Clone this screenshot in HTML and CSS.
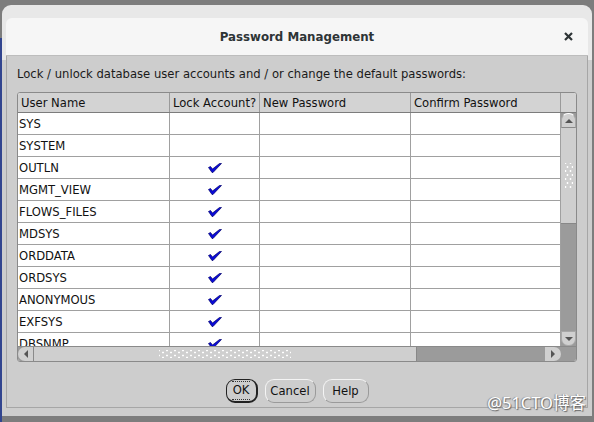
FILE: index.html
```html
<!DOCTYPE html>
<html lang="en">
<head>
    <meta charset="UTF-8">
    <title>Password Management</title>
    <link rel="stylesheet" href="styles.css">
</head>
<body>
    <div class="window">
        <div class="titlebar">
            <span class="title">Password Management</span>
            <svg class="close" width="9" height="9" viewBox="0 0 9 9">
                <path d="M1 1 L8 8 M8 1 L1 8" stroke="#2e3436" stroke-width="2.2" />
            </svg>
        </div>
        <div class="dialog">
            <p class="prompt">Lock / unlock database user accounts and / or change the default passwords:</p>
            <div class="table">
                <div class="head">
                    <div class="th">User Name</div>
                    <div class="th">Lock Account?</div>
                    <div class="th">New Password</div>
                    <div class="th">Confirm Password</div>
                    <div class="th corner"></div>
                </div>
                <div class="main">
                    <div class="rows" id="rows"></div>
                    <div class="vscroll">
                        <div class="vbtn up"><span class="tri-up"></span></div>
                        <div class="vthumb"><span class="grip-v"></span></div>
                        <div class="vtrack"></div>
                        <div class="vbtn down"><span class="tri-down"></span></div>
                    </div>
                </div>
                <div class="hbar">
                    <div class="hbtn left"><span class="tri-left"></span></div>
                    <div class="hthumb"><span class="grip-h"></span></div>
                    <div class="htrack"></div>
                    <div class="hbtn right"><span class="tri-right"></span></div>
                    <div class="hcorner"></div>
                </div>
            </div>
            <div class="buttons">
                <button class="btn ok"><span class="focus">OK</span></button>
                <button class="btn cancel">Cancel</button>
                <button class="btn help">Help</button>
            </div>
        </div>
        <div class="watermark">@51CTO博客</div>
    </div>

    <script>
        const users = [
            { name: 'SYS', locked: false },
            { name: 'SYSTEM', locked: false },
            { name: 'OUTLN', locked: true },
            { name: 'MGMT_VIEW', locked: true },
            { name: 'FLOWS_FILES', locked: true },
            { name: 'MDSYS', locked: true },
            { name: 'ORDDATA', locked: true },
            { name: 'ORDSYS', locked: true },
            { name: 'ANONYMOUS', locked: true },
            { name: 'EXFSYS', locked: true },
            { name: 'DBSNMP', locked: true }
        ];

        const check = '<svg width="14" height="10" viewBox="0 0 14 10">' +
            '<path d="M0.5 4.5 L2.5 3.5 L4.5 6 L11.5 0.5 L13.5 0.5 L5 9.5 L4 9.5 Z" fill="#0a0ad8" stroke="#00006a" stroke-width="0.7" stroke-linejoin="round"/></svg>';

        const rows = document.getElementById('rows');
        users.forEach(u => {
            const row = document.createElement('div');
            row.className = 'row';
            row.innerHTML = `<div class="td">${u.name}</div>` +
                `<div class="td lock">${u.locked ? check : ''}</div>` +
                '<div class="td"></div><div class="td"></div>';
            rows.appendChild(row);
        });
    </script>
</body>
</html>
```

FILE: styles.css
```css
body {
    margin: 0;
    width: 594px;
    height: 422px;
    overflow: hidden;
    font-family: "DejaVu Sans", sans-serif;
    font-size: 11.6px;
    color: #111;
    background:
        linear-gradient(#7d7d7d 38px, transparent 38px),
        linear-gradient(to right, #32458f 2px, #7d7d7d 2px);
}

.window {
    position: relative;
    margin: 5px 0 0 2px;
    width: 590px;
    height: 411px;
    box-sizing: border-box;
    padding: 13px 4px 0;
    background: linear-gradient(#e8e8e8 55px, #cdcdcd 55px);
    border-radius: 9px 9px 0 0;
}

.titlebar {
    position: relative;
    height: 37px;
    display: flex;
    justify-content: center;
    align-items: center;
    background-color: #f6f6f6;
    border-bottom: 1px solid #bdbdbd;
    border-radius: 6px 6px 0 0;
}

.title {
    font-family: "DejaVu Sans", sans-serif;
    font-weight: bold;
    font-size: 11.8px;
    color: #2e3436;
}

.close {
    position: absolute;
    right: 15px;
    top: 14px;
}

.dialog {
    height: 352px;
    box-sizing: border-box;
    padding: 11px 10px 6px 10px;
    background-color: #cdcdcd;
    border: 1px solid #a6a6a6;
    border-top: none;
}

.prompt {
    margin: 0 0 11px 0;
    line-height: 14px;
    color: #1a1a1a;
}

/* tabla */
.table {
    width: 560px;
    box-sizing: border-box;
    border: 1px solid #8a8a8a;
    border-radius: 3px;
    overflow: hidden;
    background-color: #fff;
}

.head {
    display: grid;
    grid-template-columns: 152px 90px 151px 150px 15px;
    height: 19px;
    border-bottom: 1px solid #7c7c7c;
    background-color: #d3d3d3;
}

.th {
    box-sizing: border-box;
    padding: 1px 0 0 3px;
    line-height: 18px;
    border-right: 1px solid #9a9a9a;
    white-space: nowrap;
    overflow: hidden;
}

.th.corner {
    border-right: none;
}

.main {
    display: flex;
    height: 233px;
}

.rows {
    width: 543px;
    overflow: hidden;
}

.row {
    display: grid;
    grid-template-columns: 152px 90px 151px 150px;
    height: 22px;
    box-sizing: border-box;
    border-bottom: 1px solid #a0a0a0;
}

.td {
    box-sizing: border-box;
    padding: 1px 0 0 1px;
    line-height: 20px;
    border-right: 1px solid #a0a0a0;
    white-space: nowrap;
}

.td.lock {
    display: flex;
    justify-content: center;
    align-items: center;
    padding: 1px 0 0 0;
}

/* barras de desplazamiento */
.vscroll {
    width: 15px;
    display: flex;
    flex-direction: column;
    background-color: #9b9b9b;
}

.vbtn {
    height: 15px;
    flex: none;
    display: flex;
    justify-content: center;
    align-items: center;
    background-color: #d0d0d0;
    box-sizing: border-box;
    border: 1px solid #a8a8a8;
}

.vbtn.up {
    border-radius: 7px 7px 0 0;
    border-top-color: #fff;
    border-bottom-color: #8a8a8a;
}

.vbtn.down {
    border-radius: 0 0 7px 7px;
}

.vthumb {
    height: 96px;
    flex: none;
    display: flex;
    justify-content: center;
    align-items: center;
    background-color: #cfcfcf;
    border-bottom: 1px solid #888;
    box-sizing: border-box;
}

.vtrack {
    flex: 1;
}

.tri-up {
    border: 4px solid transparent;
    border-bottom: 4px solid #555;
    border-top: none;
}

.tri-down {
    border: 4px solid transparent;
    border-top: 4px solid #555;
    border-bottom: none;
}

.tri-left {
    border: 4px solid transparent;
    border-right: 4px solid #555;
    border-left: none;
}

.tri-right {
    border: 4px solid transparent;
    border-left: 4px solid #555;
    border-right: none;
}

.grip-v {
    width: 8px;
    height: 26px;
    background:
        radial-gradient(circle, #fff 0.8px, transparent 1.2px) 0 0 / 5px 8px,
        radial-gradient(circle, #fff 0.8px, transparent 1.2px) 3px 4px / 5px 8px;
}

.hbar {
    display: flex;
    height: 14px;
    border-top: 1px solid #8a8a8a;
    background-color: #9b9b9b;
}

.hbtn {
    width: 16px;
    flex: none;
    display: flex;
    justify-content: center;
    align-items: center;
    background-color: #d0d0d0;
    box-sizing: border-box;
}

.hbtn.left {
    border-radius: 7px 0 0 7px;
    border-right: 1px solid #8a8a8a;
}

.hbtn.right {
    border-radius: 0 7px 7px 0;
}

.hthumb {
    width: 383px;
    flex: none;
    display: flex;
    justify-content: center;
    align-items: center;
    background-color: #cfcfcf;
    border-right: 1px solid #888;
    box-sizing: border-box;
}

.grip-h {
    width: 132px;
    height: 8px;
    background:
        radial-gradient(circle, #fff 0.8px, transparent 1.2px) 0 0 / 8px 5px,
        radial-gradient(circle, #fff 0.8px, transparent 1.2px) 4px 3px / 8px 5px;
}

.htrack {
    flex: 1;
}

.hcorner {
    width: 15px;
    flex: none;
}

/* botones */
.buttons {
    display: flex;
    justify-content: center;
    gap: 6px;
    margin-top: 17px;
}

.btn {
    height: 24px;
    padding: 0;
    font-family: "DejaVu Sans", sans-serif;
    font-size: 11.6px;
    color: #111;
    background-color: #cdcdcd;
    border: 1px solid #9a9a9a;
    border-top-color: #f4f4f4;
    border-left-color: #f4f4f4;
    border-radius: 9px;
}

.btn.ok {
    width: 32px;
    border: 1px solid #222;
    border-right-width: 2px;
    border-bottom-width: 2px;
}

.btn.cancel {
    width: 51px;
    margin-left: 1px;
}

.btn.help {
    width: 46px;
    margin-left: 1px;
}

.focus {
    display: inline-block;
    padding: 2px 1px;
    line-height: 13px;
    border-top: 1px dotted #333;
    border-bottom: 1px dotted #333;
}

.watermark {
    position: absolute;
    right: 6px;
    bottom: 2px;
    font-family: "Noto Sans", "Noto Sans CJK SC", sans-serif;
    font-size: 16.5px;
    color: #fff;
    text-shadow: 1px 1px 1px #666, -1px 0 1px #888;
}
```
